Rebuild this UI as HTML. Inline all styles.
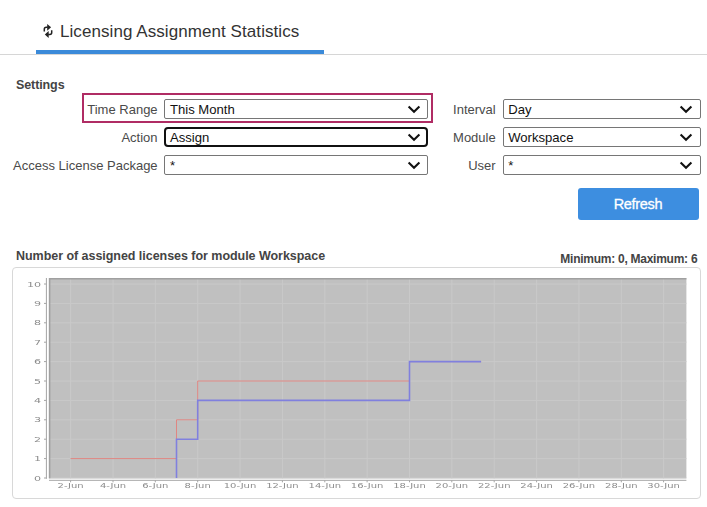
<!DOCTYPE html>
<html><head><meta charset="utf-8">
<style>
html,body{margin:0;padding:0;background:#fff;}
body{width:707px;height:507px;position:relative;overflow:hidden;font-family:"Liberation Sans",sans-serif;color:#333;}
.abs{position:absolute;}
.tabtxt{left:60px;top:22px;font-size:17px;color:#333;white-space:nowrap;line-height:20px;letter-spacing:0.07px;}
.tabline{left:36px;top:50px;width:288px;height:4px;background:#3b8ad9;}
.hr{left:0;top:54px;width:707px;height:1px;background:#d6d6d6;}
.settings{left:16px;top:78.3px;font-size:12.5px;font-weight:bold;line-height:15px;color:#444;letter-spacing:-0.1px;}
.lbl{font-size:13px;line-height:16px;color:#4a4a4a;text-align:right;white-space:nowrap;}
.sel{box-sizing:border-box;border:1px solid #767676;border-radius:2px;background:#fff;height:20px;font-size:13.1px;line-height:19.5px;color:#111;padding-left:5px;white-space:nowrap;}
.sel.focus{border:2px solid #111;border-radius:4px;height:20px;line-height:17.5px;padding-left:4.5px;}
.sel svg{position:absolute;right:6.4px;top:5.4px;}
.sel.r svg{right:7px;}
.sel.r{padding-left:4.2px;}
.hl{left:82px;top:93px;width:351px;height:29.5px;box-sizing:border-box;border:2px solid #b02c64;}
.btn{left:578px;top:188px;width:121px;height:32px;background:#3d8ee0;border-radius:3px;color:#fff;font-size:14.5px;line-height:31.6px;text-align:center;letter-spacing:-0.3px;text-indent:-1px;-webkit-text-stroke:0.3px #fff;}
.ctitle{left:16px;top:247.8px;color:#444;letter-spacing:-0.04px;font-size:12.5px;font-weight:bold;line-height:16px;white-space:nowrap;}
.minmax{right:9.7px;top:250.8px;color:#444;letter-spacing:-0.26px;font-size:12px;font-weight:bold;line-height:16px;white-space:nowrap;}
.cbox{left:12px;top:267px;width:689px;height:232px;box-sizing:border-box;border:1px solid #d8d8d8;border-radius:4px;}
.ax{font-family:"DejaVu Sans",sans-serif;font-size:7.7px;fill:#8c8c8c;}
.g{stroke:#c9c9c9;stroke-width:1;}
.a{stroke:#a4a4a4;stroke-width:1;}
</style></head><body>
<svg class="abs" style="left:40px;top:20px" width="16" height="20" viewBox="40 20 16 20"><path d="M47.2 24 L51.1 27.3 L47.2 30.8Z" fill="#222"/><path d="M47.8 27.3 H46.2 A2 2 0 0 0 44.3 29.3 V31.6" fill="none" stroke="#222" stroke-width="1.5"/><path d="M48.7 31 L44.8 34.6 L48.7 38Z" fill="#222"/><path d="M48.2 34.6 H49.8 A2 2 0 0 0 51.7 32.6 V30.2" fill="none" stroke="#222" stroke-width="1.5"/></svg>
<div class="abs tabtxt">Licensing Assignment Statistics</div>
<div class="abs tabline"></div>
<div class="abs hr"></div>
<div class="abs settings">Settings</div>

<div class="abs hl"></div>
<div class="abs lbl" style="left:0;width:157.6px;top:101.7px">Time Range</div>
<div class="abs sel" style="left:164px;top:99px;width:264px">This Month<svg width="14" height="9" viewBox="0 0 14 9"><path d="M1.6 1.6 L7 6.8 L12.4 1.6" fill="none" stroke="#111" stroke-width="2.1"/></svg></div>
<div class="abs lbl" style="left:0;width:157.6px;top:129.7px">Action</div>
<div class="abs sel focus" style="left:163.5px;top:127px;width:264.5px">Assign<svg style="right:5.4px;top:4.4px" width="14" height="9" viewBox="0 0 14 9"><path d="M1.6 1.6 L7 6.8 L12.4 1.6" fill="none" stroke="#111" stroke-width="2.1"/></svg></div>
<div class="abs lbl" style="left:0;width:157.6px;top:157.7px">Access License Package</div>
<div class="abs sel" style="left:164px;top:155px;width:264px">*<svg width="14" height="9" viewBox="0 0 14 9"><path d="M1.6 1.6 L7 6.8 L12.4 1.6" fill="none" stroke="#111" stroke-width="2.1"/></svg></div>

<div class="abs lbl" style="left:400px;width:95.7px;top:101.7px">Interval</div>
<div class="abs sel r" style="left:503px;top:99px;width:198px">Day<svg width="14" height="9" viewBox="0 0 14 9"><path d="M1.6 1.6 L7 6.8 L12.4 1.6" fill="none" stroke="#111" stroke-width="2.1"/></svg></div>
<div class="abs lbl" style="left:400px;width:95.7px;top:129.7px">Module</div>
<div class="abs sel r" style="left:503px;top:127px;width:198px">Workspace<svg width="14" height="9" viewBox="0 0 14 9"><path d="M1.6 1.6 L7 6.8 L12.4 1.6" fill="none" stroke="#111" stroke-width="2.1"/></svg></div>
<div class="abs lbl" style="left:400px;width:95.7px;top:157.7px">User</div>
<div class="abs sel r" style="left:503px;top:155px;width:198px">*<svg width="14" height="9" viewBox="0 0 14 9"><path d="M1.6 1.6 L7 6.8 L12.4 1.6" fill="none" stroke="#111" stroke-width="2.1"/></svg></div>

<div class="abs btn"><span style="display:block;transform:translateY(0.55px)">Refresh</span></div>
<div class="abs ctitle">Number of assigned licenses for module Workspace</div>
<div class="abs minmax">Minimum: 0, Maximum: 6</div>
<div class="abs cbox"></div>
<svg class="abs" id="chart" style="left:0;top:260px;filter:blur(0.35px)" width="707" height="247" viewBox="0 260 707 247">
<rect x="49.0" y="278.0" width="637.4" height="200.3" fill="#c0c0c0"/>
<line x1="70.6" y1="278.0" x2="70.6" y2="478.3" class="g"/>
<line x1="113.0" y1="278.0" x2="113.0" y2="478.3" class="g"/>
<line x1="155.3" y1="278.0" x2="155.3" y2="478.3" class="g"/>
<line x1="197.7" y1="278.0" x2="197.7" y2="478.3" class="g"/>
<line x1="240.0" y1="278.0" x2="240.0" y2="478.3" class="g"/>
<line x1="282.4" y1="278.0" x2="282.4" y2="478.3" class="g"/>
<line x1="324.8" y1="278.0" x2="324.8" y2="478.3" class="g"/>
<line x1="367.1" y1="278.0" x2="367.1" y2="478.3" class="g"/>
<line x1="409.5" y1="278.0" x2="409.5" y2="478.3" class="g"/>
<line x1="451.8" y1="278.0" x2="451.8" y2="478.3" class="g"/>
<line x1="494.2" y1="278.0" x2="494.2" y2="478.3" class="g"/>
<line x1="536.6" y1="278.0" x2="536.6" y2="478.3" class="g"/>
<line x1="578.9" y1="278.0" x2="578.9" y2="478.3" class="g"/>
<line x1="621.3" y1="278.0" x2="621.3" y2="478.3" class="g"/>
<line x1="663.6" y1="278.0" x2="663.6" y2="478.3" class="g"/>
<line x1="49.0" y1="478.0" x2="686.4" y2="478.0" class="g"/>
<line x1="49.0" y1="458.6" x2="686.4" y2="458.6" class="g"/>
<line x1="49.0" y1="439.2" x2="686.4" y2="439.2" class="g"/>
<line x1="49.0" y1="419.8" x2="686.4" y2="419.8" class="g"/>
<line x1="49.0" y1="400.4" x2="686.4" y2="400.4" class="g"/>
<line x1="49.0" y1="381.0" x2="686.4" y2="381.0" class="g"/>
<line x1="49.0" y1="361.6" x2="686.4" y2="361.6" class="g"/>
<line x1="49.0" y1="342.2" x2="686.4" y2="342.2" class="g"/>
<line x1="49.0" y1="322.8" x2="686.4" y2="322.8" class="g"/>
<line x1="49.0" y1="303.4" x2="686.4" y2="303.4" class="g"/>
<line x1="49.0" y1="284.0" x2="686.4" y2="284.0" class="g"/>
<path d="M49.6 478.3 V278.8 H686.4" fill="none" stroke="#a0a0a0" stroke-width="1.6"/>
<line x1="46.4" y1="278.0" x2="46.4" y2="478.8" class="a"/>
<line x1="49.0" y1="480.3" x2="686.4" y2="480.3" class="a"/>
<line x1="44" y1="478.0" x2="46.4" y2="478.0" class="a"/>
<text transform="translate(41.2 480.5) scale(1.45 1)" text-anchor="end" class="ax">0</text>
<line x1="44" y1="458.6" x2="46.4" y2="458.6" class="a"/>
<text transform="translate(41.2 461.1) scale(1.45 1)" text-anchor="end" class="ax">1</text>
<line x1="44" y1="439.2" x2="46.4" y2="439.2" class="a"/>
<text transform="translate(41.2 441.7) scale(1.45 1)" text-anchor="end" class="ax">2</text>
<line x1="44" y1="419.8" x2="46.4" y2="419.8" class="a"/>
<text transform="translate(41.2 422.3) scale(1.45 1)" text-anchor="end" class="ax">3</text>
<line x1="44" y1="400.4" x2="46.4" y2="400.4" class="a"/>
<text transform="translate(41.2 402.9) scale(1.45 1)" text-anchor="end" class="ax">4</text>
<line x1="44" y1="381.0" x2="46.4" y2="381.0" class="a"/>
<text transform="translate(41.2 383.5) scale(1.45 1)" text-anchor="end" class="ax">5</text>
<line x1="44" y1="361.6" x2="46.4" y2="361.6" class="a"/>
<text transform="translate(41.2 364.1) scale(1.45 1)" text-anchor="end" class="ax">6</text>
<line x1="44" y1="342.2" x2="46.4" y2="342.2" class="a"/>
<text transform="translate(41.2 344.7) scale(1.45 1)" text-anchor="end" class="ax">7</text>
<line x1="44" y1="322.8" x2="46.4" y2="322.8" class="a"/>
<text transform="translate(41.2 325.3) scale(1.45 1)" text-anchor="end" class="ax">8</text>
<line x1="44" y1="303.4" x2="46.4" y2="303.4" class="a"/>
<text transform="translate(41.2 305.9) scale(1.45 1)" text-anchor="end" class="ax">9</text>
<line x1="44" y1="284.0" x2="46.4" y2="284.0" class="a"/>
<text transform="translate(41.2 286.5) scale(1.45 1)" text-anchor="end" class="ax">10</text>
<line x1="70.6" y1="480.3" x2="70.6" y2="482.3" class="a"/>
<text transform="translate(70.6 487.6) scale(1.3 1)" text-anchor="middle" class="ax">2-Jun</text>
<line x1="113.0" y1="480.3" x2="113.0" y2="482.3" class="a"/>
<text transform="translate(113.0 487.6) scale(1.3 1)" text-anchor="middle" class="ax">4-Jun</text>
<line x1="155.3" y1="480.3" x2="155.3" y2="482.3" class="a"/>
<text transform="translate(155.3 487.6) scale(1.3 1)" text-anchor="middle" class="ax">6-Jun</text>
<line x1="197.7" y1="480.3" x2="197.7" y2="482.3" class="a"/>
<text transform="translate(197.7 487.6) scale(1.3 1)" text-anchor="middle" class="ax">8-Jun</text>
<line x1="240.0" y1="480.3" x2="240.0" y2="482.3" class="a"/>
<text transform="translate(240.0 487.6) scale(1.3 1)" text-anchor="middle" class="ax">10-Jun</text>
<line x1="282.4" y1="480.3" x2="282.4" y2="482.3" class="a"/>
<text transform="translate(282.4 487.6) scale(1.3 1)" text-anchor="middle" class="ax">12-Jun</text>
<line x1="324.8" y1="480.3" x2="324.8" y2="482.3" class="a"/>
<text transform="translate(324.8 487.6) scale(1.3 1)" text-anchor="middle" class="ax">14-Jun</text>
<line x1="367.1" y1="480.3" x2="367.1" y2="482.3" class="a"/>
<text transform="translate(367.1 487.6) scale(1.3 1)" text-anchor="middle" class="ax">16-Jun</text>
<line x1="409.5" y1="480.3" x2="409.5" y2="482.3" class="a"/>
<text transform="translate(409.5 487.6) scale(1.3 1)" text-anchor="middle" class="ax">18-Jun</text>
<line x1="451.8" y1="480.3" x2="451.8" y2="482.3" class="a"/>
<text transform="translate(451.8 487.6) scale(1.3 1)" text-anchor="middle" class="ax">20-Jun</text>
<line x1="494.2" y1="480.3" x2="494.2" y2="482.3" class="a"/>
<text transform="translate(494.2 487.6) scale(1.3 1)" text-anchor="middle" class="ax">22-Jun</text>
<line x1="536.6" y1="480.3" x2="536.6" y2="482.3" class="a"/>
<text transform="translate(536.6 487.6) scale(1.3 1)" text-anchor="middle" class="ax">24-Jun</text>
<line x1="578.9" y1="480.3" x2="578.9" y2="482.3" class="a"/>
<text transform="translate(578.9 487.6) scale(1.3 1)" text-anchor="middle" class="ax">26-Jun</text>
<line x1="621.3" y1="480.3" x2="621.3" y2="482.3" class="a"/>
<text transform="translate(621.3 487.6) scale(1.3 1)" text-anchor="middle" class="ax">28-Jun</text>
<line x1="663.6" y1="480.3" x2="663.6" y2="482.3" class="a"/>
<text transform="translate(663.6 487.6) scale(1.3 1)" text-anchor="middle" class="ax">30-Jun</text>
<path d="M70.6 458.6 L176.5 458.6 L176.5 419.8 L197.7 419.8 L197.7 381.0 L409.5 381.0 L409.5 361.6 L481.1 361.6" fill="none" stroke="#df8682" stroke-width="1"/>
<path d="M176.5 478.0 L176.5 439.2 L197.7 439.2 L197.7 400.4 L409.5 400.4 L409.5 361.6 L481.1 361.6" fill="none" stroke="#8080de" stroke-width="1.6"/>
</svg>
</body></html>
